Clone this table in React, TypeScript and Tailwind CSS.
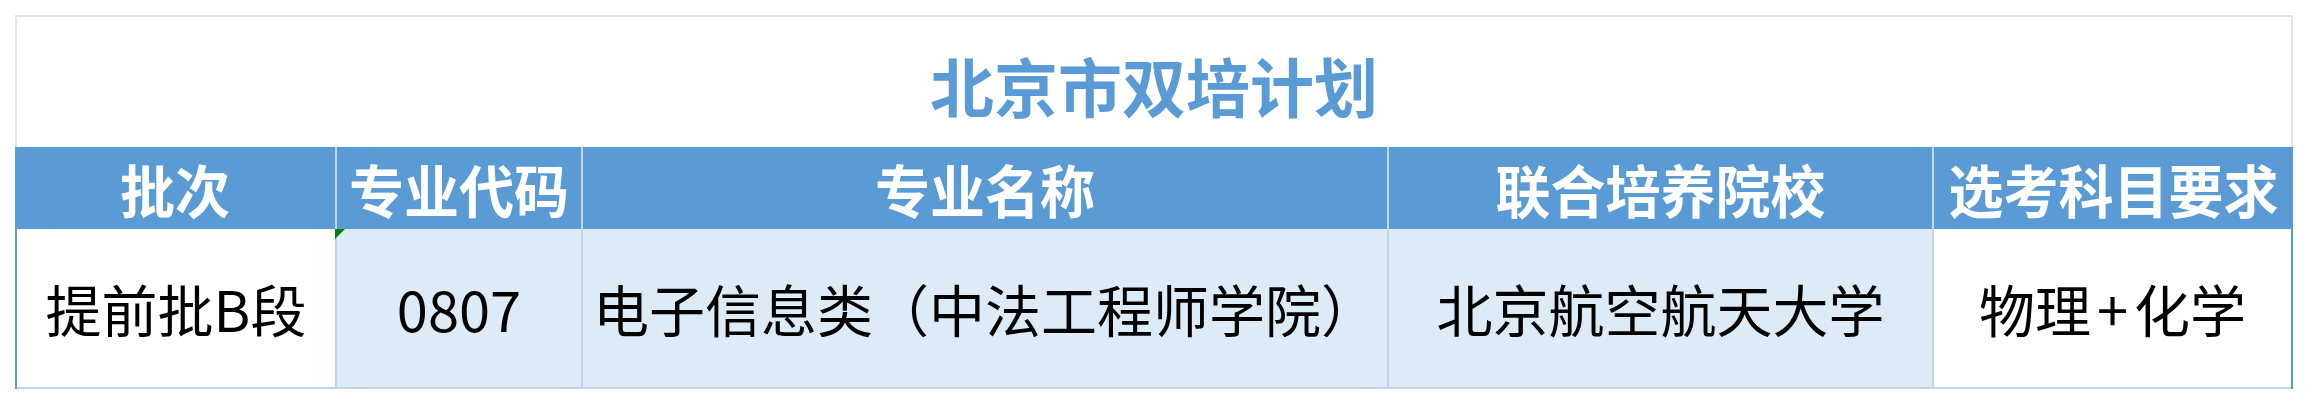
const font = { fontFamily: '"Noto Sans CJK SC", "Noto Sans", sans-serif' };

const headers = [
  { label: "批次", w: "w-[320px]" },
  { label: "专业代码", w: "w-[246px] border-l-2 border-[#bdd7ee]" },
  { label: "专业名称", w: "w-[806px] border-l-2 border-[#bdd7ee]" },
  { label: "联合培养院校", w: "w-[545px] border-l-2 border-[#bdd7ee]" },
  { label: "选考科目要求", w: "w-[361px] border-l-2 border-[#bdd7ee]" },
];

function GreenMark() {
  return (
    <svg className="absolute left-[-2px] top-0" width="10" height="10" viewBox="0 0 10 10">
      <polygon points="0,0 10,0 0,10" fill="#0b7a0b" />
    </svg>
  );
}

export default function App() {
  return (
    <div className="min-h-[404px] w-[2308px] bg-white pl-[15px] pt-[15px]" style={font}>
      <div className="w-[2278px]">
        <div className="flex h-[132px] items-center justify-center border-x-2 border-t-2 border-[#e4e4e4] pt-[4px]">
          <span className="text-[64px] font-bold leading-none text-[#5b9bd5]">北京市双培计划</span>
        </div>

        <div className="flex h-[82px] bg-[#5b9bd5]">
          {headers.map((h) => (
            <div
              key={h.label}
              className={`flex shrink-0 items-center justify-center text-[55px] font-bold leading-none text-white ${h.w}`}
            >
              <span className="scale-y-[1.04]">{h.label}</span>
            </div>
          ))}
        </div>

        <div className="border-x-2 border-[#5b9bd5]">
          <div className="flex h-[160px] border-b-2 border-[#bdd7ee] text-[56px] leading-none text-black">
            <div className="flex w-[318px] shrink-0 items-center justify-center bg-white">提前批B段</div>
            <div className="relative flex w-[246px] shrink-0 items-center justify-center border-l-2 border-[#bdd7ee] bg-[#ddebf7]">
              <GreenMark />
              0807
            </div>
            <div className="flex w-[806px] shrink-0 items-center justify-center border-l-2 border-[#bdd7ee] bg-[#ddebf7] whitespace-nowrap">
              电子信息类（中法工程师学院）
            </div>
            <div className="flex w-[545px] shrink-0 items-center justify-center border-l-2 border-[#bdd7ee] bg-[#ddebf7]">
              北京航空航天大学
            </div>
            <div className="flex w-[359px] shrink-0 items-center justify-center border-l-2 border-[#bdd7ee] bg-white">
              物理<span className="mx-[6px]">+</span>化学
            </div>
          </div>
        </div>
      </div>
    </div>
  );
}
